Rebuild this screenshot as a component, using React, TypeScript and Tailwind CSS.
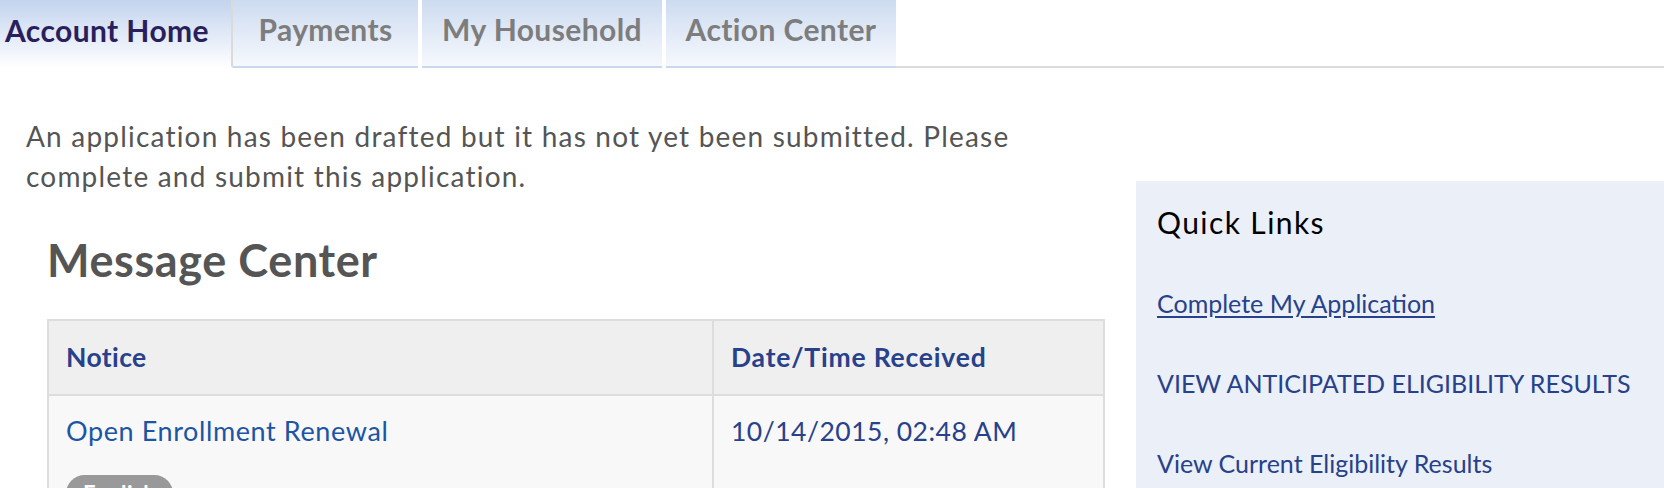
const tabs = [
  { label: "Account Home", width: "w-[231px]", active: true },
  { label: "Payments", width: "w-[187px]", active: false },
  { label: "My Household", width: "w-[240px]", active: false },
  { label: "Action Center", width: "w-[230px]", active: false },
];

const quickLinks = [
  { label: "Complete My Application", extra: "underline underline-offset-[3px]" },
  { label: "VIEW ANTICIPATED ELIGIBILITY RESULTS", extra: "" },
  { label: "View Current Eligibility Results", extra: "" },
];

export default function App() {
  return (
    <div className="w-[1664px] h-[488px] overflow-hidden bg-white font-['Lato',sans-serif]">
      {/* tabs */}
      <div className="flex h-[68px]">
        {tabs.map((tab, i) => (
          <div
            key={tab.label}
            className={
              tab.active
                ? `${tab.width} h-[68px] flex items-center pl-[5px] pb-[8px] bg-gradient-to-b from-[#c3d4ee] to-white text-[#2a1f5c]`
                : `${tab.width} h-[68px] flex items-center justify-center pb-[8px] bg-gradient-to-b from-[#cddbf0] to-[#f6f9fd] border-b-2 border-[#c9d8ee] text-[#7d7d7d] ${
                    i === 1 ? "border-l-2 border-l-[#dadada] rounded-bl-[3px]" : "ml-[4px]"
                  }`
            }
          >
            <span className="text-[30px] font-bold tracking-[0.4px]">{tab.label}</span>
          </div>
        ))}
        <div className="flex-1 border-b-2 border-[#dcdcdc]" />
      </div>

      <div className="flex">
        {/* main column */}
        <div className="w-[1136px] shrink-0 pl-[26px] pt-[48px]">
          <p className="w-[1030px] text-[28px] leading-[40px] tracking-[1.2px] text-[#555555]">
            An application has been drafted but it has not yet been submitted. Please complete and submit this
            application.
          </p>

          <div className="ml-[21px] w-[1058px]">
            <h2 className="mt-[38px] text-[45px] leading-[53px] font-bold tracking-[0.6px] text-[#555555]">
              Message Center
            </h2>

            <table className="mt-[32px] w-full border-collapse border-2 border-[#dddddd]">
              <thead>
                <tr className="bg-[#efefef]">
                  <th className="w-[665px] h-[75px] border-2 border-[#dddddd] pl-[17px] text-left text-[26.5px] font-bold tracking-[0.4px] text-[#27418a]">
                    Notice
                  </th>
                  <th className="h-[75px] border-2 border-[#dddddd] pl-[17px] text-left text-[26.5px] font-bold tracking-[0.8px] text-[#27418a]">
                    Date/Time Received
                  </th>
                </tr>
              </thead>
              <tbody>
                <tr className="bg-[#f8f8f8]">
                  <td className="border-2 border-[#dddddd] pl-[17px] pt-[18px] align-top">
                    <div className="text-[27px] leading-[34px] tracking-[0.6px] text-[#1b55a3]">
                      Open Enrollment Renewal
                    </div>
                    <span className="mt-[27px] inline-block rounded-full bg-[#999999] px-[17px] py-[2px] text-[22px] font-bold tracking-[0.5px] text-white">
                      English
                    </span>
                  </td>
                  <td className="border-2 border-[#dddddd] pl-[17px] pt-[18px] align-top">
                    <div className="text-[26.5px] leading-[34px] tracking-[0.5px] text-[#27418a]">
                      10/14/2015, 02:48 AM
                    </div>
                  </td>
                </tr>
              </tbody>
            </table>
          </div>
        </div>

        {/* quick links */}
        <aside className="flex-1 mt-[113px] h-[400px] bg-[#ebeff8] pl-[21px] pt-[21px]">
          <h3 className="text-[30px] leading-[40px] tracking-[1.4px] text-black">Quick Links</h3>
          <ul className="mt-[44px] flex flex-col gap-[46px]">
            {quickLinks.map((link) => (
              <li key={link.label} className="whitespace-nowrap">
                <a href="#" className={`text-[25px] leading-[34px] text-[#27418a] ${link.extra}`}>
                  {link.label}
                </a>
              </li>
            ))}
          </ul>
        </aside>
      </div>
    </div>
  );
}
